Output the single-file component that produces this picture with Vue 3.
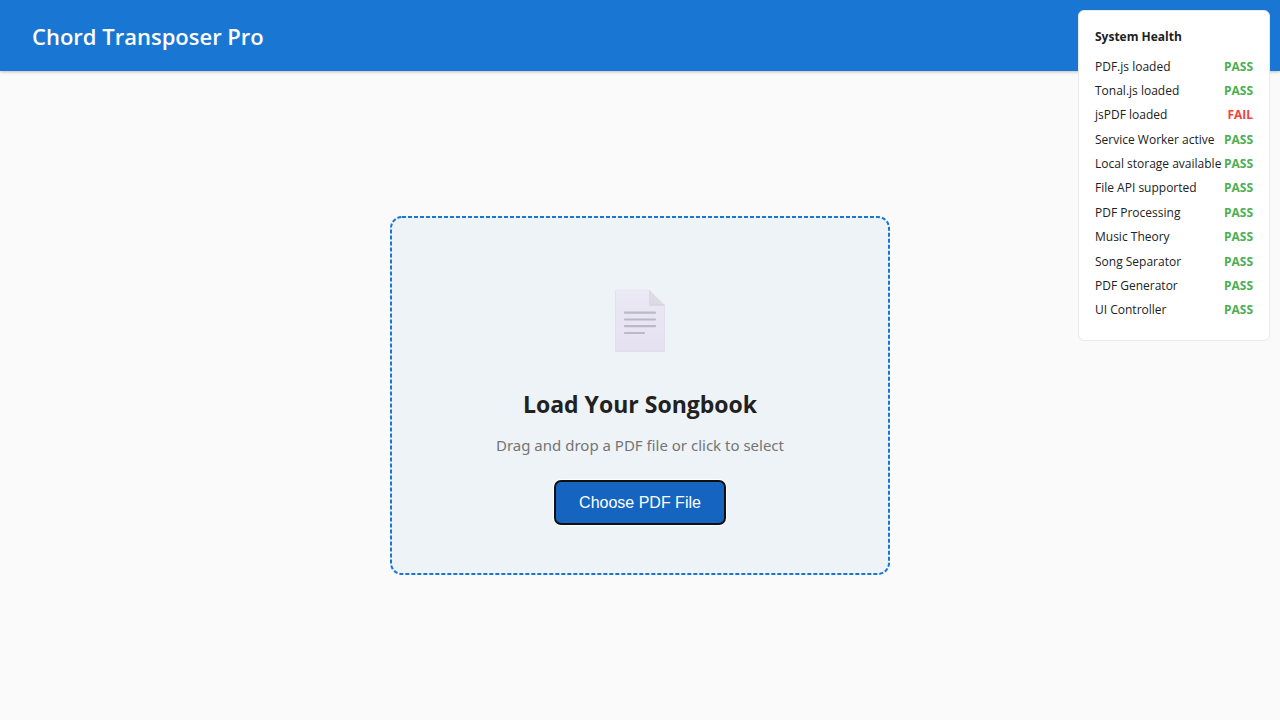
<script setup>
import { ref } from 'vue'

const fileInput = ref(null)
const checks = [
  { name: 'PDF.js loaded', ok: true },
  { name: 'Tonal.js loaded', ok: true },
  { name: 'jsPDF loaded', ok: false },
  { name: 'Service Worker active', ok: true },
  { name: 'Local storage available', ok: true },
  { name: 'File API supported', ok: true },
  { name: 'PDF Processing', ok: true },
  { name: 'Music Theory', ok: true },
  { name: 'Song Separator', ok: true },
  { name: 'PDF Generator', ok: true },
  { name: 'UI Controller', ok: true }
]
</script>

<template>
  <div class="app">
    <header class="header">
      <h1>Chord Transposer Pro</h1>
    </header>

    <main class="main">
      <section class="upload">
        <svg class="outline" aria-hidden="true">
          <rect x="1" y="1" rx="11" />
        </svg>
        <svg class="page-icon" viewBox="0 0 64 64" aria-hidden="true">
          <defs>
            <linearGradient id="paper" x1="0" y1="0" x2="0" y2="1">
              <stop offset="0" stop-color="#ebe9f5" />
              <stop offset="1" stop-color="#e6e1f1" />
            </linearGradient>
            <linearGradient id="fold" x1="0" y1="1" x2="1" y2="0">
              <stop offset="0" stop-color="#d9d9e0" />
              <stop offset="1" stop-color="#e0e0e5" />
            </linearGradient>
          </defs>
          <path d="M8 0.500H41L57 16.500V62Q57 63 56 63H8Q7 63 7 62V1.500Q7 0.500 8 0.500Z" fill="url(#paper)" />
          <path d="M7.500 2V62.500H56.500V17" fill="none" stroke="#e1dcea" stroke-width="0.700" />
          <path d="M41 0.500L57 16.500H42Q41 16.500 41 15.500Z" fill="url(#fold)" />
          <path d="M42 16H56.500" stroke="#d2d1da" stroke-width="0.800" />
          <path d="M17 23.700H47M17 30.500H47M17 37.200H47M17 44H36" stroke="#bbb8c7" stroke-width="2.200" stroke-linecap="round" />
        </svg>
        <h2>Load Your Songbook</h2>
        <p>Drag and drop a PDF file or click to select</p>
        <button type="button" @click="fileInput.click()">Choose PDF File</button>
        <input ref="fileInput" type="file" accept=".pdf" aria-label="PDF file" hidden />
      </section>
    </main>

    <aside class="health">
      <h3>System Health</h3>
      <ul>
        <li v-for="check in checks" :key="check.name">
          <span>{{ check.name }}</span>
          <strong :class="check.ok ? 'pass' : 'fail'">{{ check.ok ? 'PASS' : 'FAIL' }}</strong>
        </li>
      </ul>
    </aside>
  </div>
</template>

<style>
body {
  margin: 0;
  background: #fafafa;
}
</style>

<style scoped>
.app {
  display: flex;
  flex-direction: column;
  min-height: 100vh;
  color: #212121;
  font-family: "Segoe UI", "Open Sans", "Noto Sans", sans-serif;
}

h1, h2, h3, p, ul {
  margin: 0;
}

.header {
  padding: 17px 32px 15px;
  background: #1976d2;
  color: #fff;
  box-shadow: 0 1px 3px rgba(0, 0, 0, 0.24);
}

.header h1 {
  font-size: 22px;
  line-height: 39px;
  font-weight: 600;
}

.main {
  flex: 1;
  display: flex;
  align-items: center;
  justify-content: center;
}

.upload {
  position: relative;
  box-sizing: border-box;
  width: 100%;
  max-width: 500px;
  padding: 50px;
  border-radius: 12px;
  background: #edf3f7;
  display: flex;
  flex-direction: column;
  align-items: center;
  text-align: center;
}

.outline {
  position: absolute;
  inset: 0;
  width: 100%;
  height: 100%;
  pointer-events: none;
}

.outline rect {
  width: calc(100% - 2px);
  height: calc(100% - 2px);
  fill: none;
  stroke: #1976d2;
  stroke-width: 2px;
  stroke-dasharray: 4 2;
}

.page-icon {
  width: 64px;
  height: 64px;
  margin: 23px 0 32px;
}

.upload h2 {
  margin-bottom: 9px;
  font-size: 23px;
  line-height: 38px;
  font-weight: 700;
}

.upload p {
  margin-bottom: 22px;
  font-family: "Segoe UI", "Noto Sans", sans-serif;
  font-size: 15px;
  line-height: 26px;
  color: #757575;
}

.upload button {
  margin: 1px 0;
  padding: 12px 24px;
  border: 0;
  border-radius: 6px;
  background: #1565c0;
  color: #fff;
  font-family: "Liberation Sans", Arial, sans-serif;
  font-size: 16px;
  line-height: 19px;
  outline: 2px solid #101010;
  outline-offset: -1px;
  box-shadow: 0 0 0 2px #fff;
}

.health {
  position: absolute;
  top: 10px;
  right: 10px;
  box-sizing: border-box;
  width: 192px;
  padding: 16px;
  border: 1px solid #e9e9e9;
  border-radius: 6px;
  background: #fff;
  font-size: 12px;
}

.health h3 {
  margin-bottom: 7px;
  font-size: 12px;
  line-height: 20px;
  font-weight: 700;
}

.health ul {
  display: grid;
  grid-auto-rows: 1fr;
  min-height: 268px;
  padding: 0 0 2px;
  list-style: none;
}

.health li {
  display: flex;
  align-items: center;
  justify-content: space-between;
  white-space: nowrap;
}

.pass {
  color: #4caf50;
}

.fail {
  color: #f44336;
}
</style>
